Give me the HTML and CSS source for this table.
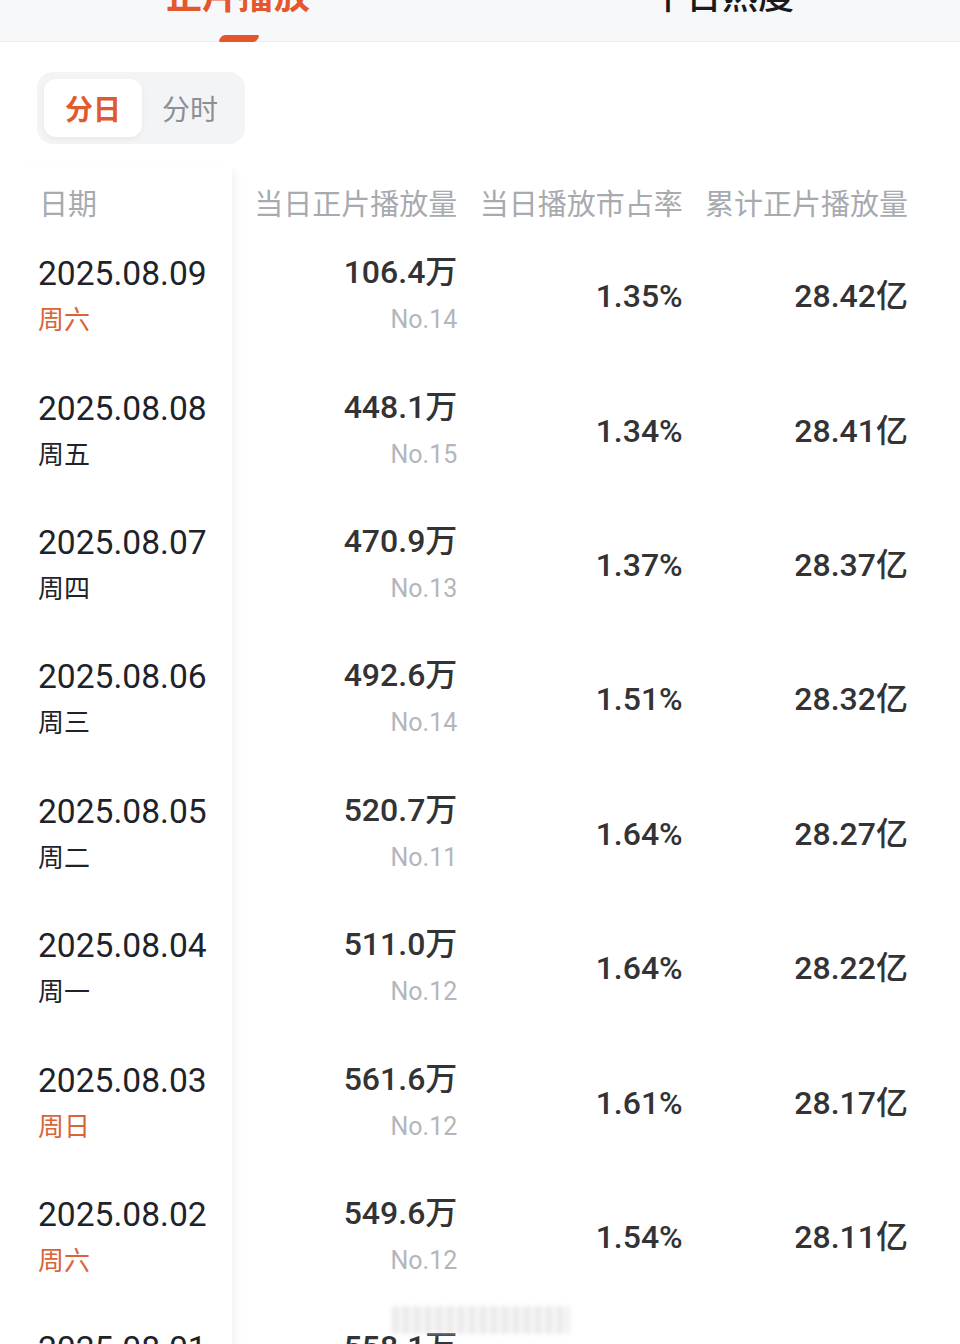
FILE: index.html
```html
<!DOCTYPE html>
<html lang="zh-CN">
<head>
<meta charset="utf-8">
<title>正片播放</title>
<link rel="stylesheet" href="styles.css">
</head>
<body>
<div class="tabs">
  <div class="tab tab-active">正片播放</div>
  <div class="tab tab-second">平台热度</div>
</div>

<div class="seg-wrap">
  <div class="seg">
    <div class="seg-item seg-on">分日</div>
    <div class="seg-item">分时</div>
  </div>
</div>

<div class="table">
  <div class="col-fixed">
    <div class="head-cell">日期</div>
    <div class="cell date-cell"><div class="date">2025.08.09</div><div class="wd weekend">周六</div></div>
    <div class="cell date-cell"><div class="date">2025.08.08</div><div class="wd">周五</div></div>
    <div class="cell date-cell"><div class="date">2025.08.07</div><div class="wd">周四</div></div>
    <div class="cell date-cell"><div class="date">2025.08.06</div><div class="wd">周三</div></div>
    <div class="cell date-cell"><div class="date">2025.08.05</div><div class="wd">周二</div></div>
    <div class="cell date-cell"><div class="date">2025.08.04</div><div class="wd">周一</div></div>
    <div class="cell date-cell"><div class="date">2025.08.03</div><div class="wd weekend">周日</div></div>
    <div class="cell date-cell"><div class="date">2025.08.02</div><div class="wd weekend">周六</div></div>
    <div class="cell date-cell"><div class="date">2025.08.01</div><div class="wd">周五</div></div>
  </div>
  <div class="col-scroll">
    <div class="row head-row">
      <div class="head-cell">当日正片播放量</div>
      <div class="head-cell">当日播放市占率</div>
      <div class="head-cell">累计正片播放量</div>
    </div>
    <div class="row">
      <div class="cell num-cell"><div class="val">106.4万</div><div class="rank">No.14</div></div>
      <div class="cell num-cell"><div class="val">1.35%</div></div>
      <div class="cell num-cell"><div class="val">28.42亿</div></div>
    </div>
    <div class="row">
      <div class="cell num-cell"><div class="val">448.1万</div><div class="rank">No.15</div></div>
      <div class="cell num-cell"><div class="val">1.34%</div></div>
      <div class="cell num-cell"><div class="val">28.41亿</div></div>
    </div>
    <div class="row">
      <div class="cell num-cell"><div class="val">470.9万</div><div class="rank">No.13</div></div>
      <div class="cell num-cell"><div class="val">1.37%</div></div>
      <div class="cell num-cell"><div class="val">28.37亿</div></div>
    </div>
    <div class="row">
      <div class="cell num-cell"><div class="val">492.6万</div><div class="rank">No.14</div></div>
      <div class="cell num-cell"><div class="val">1.51%</div></div>
      <div class="cell num-cell"><div class="val">28.32亿</div></div>
    </div>
    <div class="row">
      <div class="cell num-cell"><div class="val">520.7万</div><div class="rank">No.11</div></div>
      <div class="cell num-cell"><div class="val">1.64%</div></div>
      <div class="cell num-cell"><div class="val">28.27亿</div></div>
    </div>
    <div class="row">
      <div class="cell num-cell"><div class="val">511.0万</div><div class="rank">No.12</div></div>
      <div class="cell num-cell"><div class="val">1.64%</div></div>
      <div class="cell num-cell"><div class="val">28.22亿</div></div>
    </div>
    <div class="row">
      <div class="cell num-cell"><div class="val">561.6万</div><div class="rank">No.12</div></div>
      <div class="cell num-cell"><div class="val">1.61%</div></div>
      <div class="cell num-cell"><div class="val">28.17亿</div></div>
    </div>
    <div class="row">
      <div class="cell num-cell"><div class="val">549.6万</div><div class="rank">No.12</div></div>
      <div class="cell num-cell"><div class="val">1.54%</div></div>
      <div class="cell num-cell"><div class="val">28.11亿</div></div>
    </div>
    <div class="row">
      <div class="cell num-cell"><div class="val">558.1万</div><div class="rank">No.12</div></div>
      <div class="cell num-cell"><div class="val">1.57%</div></div>
      <div class="cell num-cell"><div class="val">28.06亿</div></div>
    </div>
  </div>
  <div class="watermark" aria-hidden="true"></div>
</div>
</body>
</html>
```

FILE: styles.css
```css
html, body {
  margin: 0;
  padding: 0;
  background: #ffffff;
  overflow: hidden;
}
body {
  width: 960px;
  height: 1344px;
  font-family: Roboto, "Noto Sans CJK SC", sans-serif;
  color: #222;
}

/* top tabs */
.tabs {
  height: 41px;
  display: flex;
  background: #f7f8fa;
  border-bottom: 1px solid #ececec;
}
.tab {
  position: relative;
  flex: 1;
  display: flex;
  justify-content: center;
  align-items: flex-end;
  height: 41px;
  margin-top: -30px;
  padding-bottom: 30px;
  font-family: "Noto Sans CJK SC", sans-serif;
  font-size: 36px;
  line-height: 36px;
  font-weight: 500;
  color: #1a1a1a;
}
.tab-second {
  padding-left: 8px;
}
.tab-active {
  color: #e4572c;
  font-weight: 700;
}
.tab-active::after {
  content: "";
  position: absolute;
  left: 50%;
  bottom: -1px;
  width: 38px;
  height: 7px;
  margin-left: -18px;
  background: #e4552a;
  border-radius: 3px;
  transform: skewX(-30deg);
}

/* segmented control */
.seg-wrap {
  padding: 30px 0 0 37px;
}
.seg {
  display: inline-flex;
  padding: 7px;
  background: #f3f4f6;
  border-radius: 16px;
}
.seg-item {
  width: 98px;
  height: 58px;
  display: flex;
  align-items: center;
  justify-content: center;
  font-family: "Noto Sans CJK SC", sans-serif;
  font-size: 28px;
  color: #8b8f96;
  border-radius: 12px;
}
.seg-item + .seg-item {
  width: 96px;
}
.seg-on {
  background: #ffffff;
  color: #e05a2b;
  font-weight: 700;
  box-shadow: 0 2px 6px rgba(0, 0, 0, 0.05);
}

/* table */
.table {
  position: relative;
  display: flex;
  margin-top: 22px;
}
.col-fixed {
  position: relative;
  z-index: 1;
  width: 232px;
  flex: none;
  background: #fff;
  box-shadow: 8px 0 10px -6px rgba(0, 0, 0, 0.07);
}
.col-scroll {
  flex: none;
  width: 676px;
}
.row {
  display: grid;
  grid-template-columns: repeat(3, 1fr);
}
.head-cell {
  height: 63px;
  box-sizing: border-box;
  padding-top: 20px;
  line-height: 32px;
  font-family: "Noto Sans CJK SC", sans-serif;
  font-size: 29px;
  color: #a7aaaf;
  white-space: nowrap;
}
.col-fixed .head-cell {
  padding-left: 39px;
}
.head-row .head-cell {
  text-align: right;
}
.cell {
  height: 134.4px;
  display: flex;
  flex-direction: column;
  justify-content: center;
}
.date-cell {
  padding-left: 38px;
}
.date {
  font-size: 33.6px;
  line-height: 40px;
  color: #1e2329;
}
.wd {
  margin-top: 4px;
  font-family: "Noto Sans CJK SC", sans-serif;
  font-size: 26px;
  line-height: 40px;
  color: #1e2329;
}
.wd.weekend {
  color: #d9643a;
}
.num-cell {
  align-items: flex-end;
}
.val {
  font-size: 32px;
  line-height: 40px;
  font-weight: 500;
  color: #333335;
}
.rank {
  margin-top: 8px;
  font-size: 25px;
  line-height: 40px;
  color: #b3b6bb;
}

.watermark {
  position: absolute;
  left: 392px;
  top: 1140px;
  width: 178px;
  height: 28px;
  background: repeating-linear-gradient(90deg, #dcdcdc 0 6px, #f2f2f2 6px 11px);
  filter: blur(2px);
  opacity: 0.6;
  z-index: 2;
}
```
